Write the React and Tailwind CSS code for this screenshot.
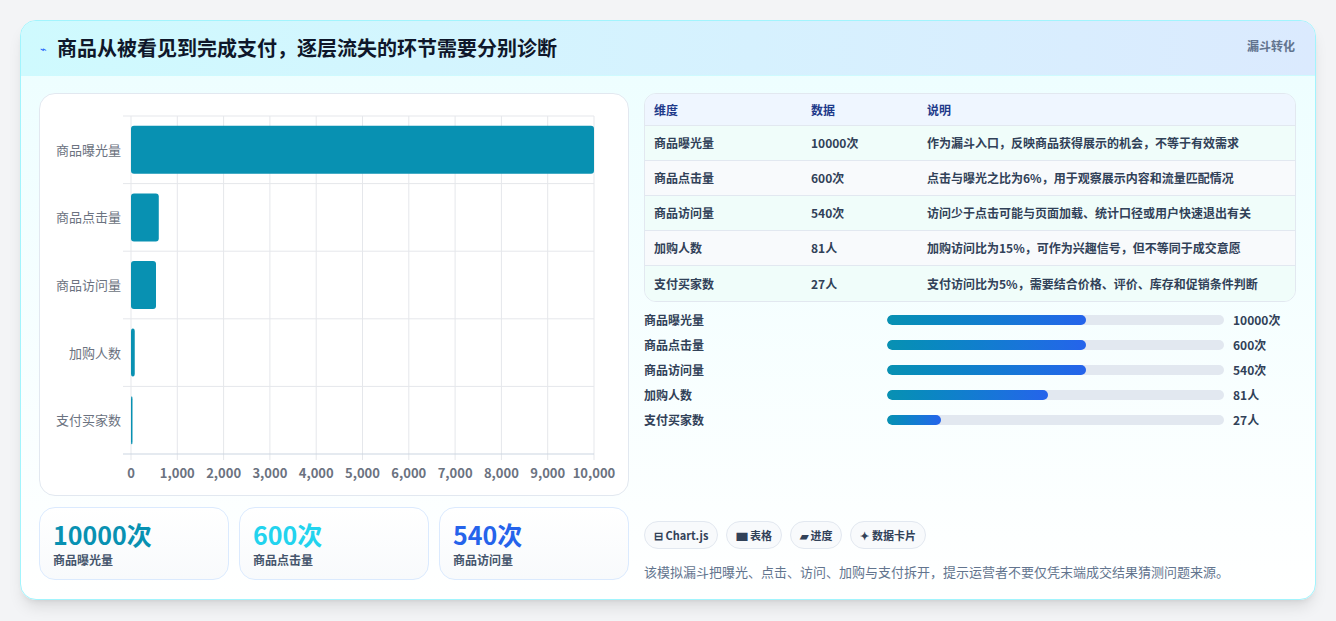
import React from "react";

const F = { fontFamily: '"Noto Sans CJK SC", "Noto Sans", sans-serif' };
const rows = [
  ["商品曝光量", "10000次", "作为漏斗入口，反映商品获得展示的机会，不等于有效需求", 10000, 199],
  ["商品点击量", "600次", "点击与曝光之比为6%，用于观察展示内容和流量匹配情况", 600, 199],
  ["商品访问量", "540次", "访问少于点击可能与页面加载、统计口径或用户快速退出有关", 540, 199],
  ["加购人数", "81人", "加购访问比为15%，可作为兴趣信号，但不等同于成交意愿", 81, 161],
  ["支付买家数", "27人", "支付访问比为5%，需要结合价格、评价、库存和促销条件判断", 27, 54],
];

function Chart() {
  const x0 = 91, x1 = 554, top = 22, rowH = 67.6;
  const sx = (v) => x0 + (v / 10000) * (x1 - x0);
  return (
    <svg width="590" height="403" style={F}>
      {Array.from({ length: 11 }).map((_, i) => (
        <g key={i}>
          <line x1={sx(i * 1000)} x2={sx(i * 1000)} y1={top} y2={top + rowH * 5 + 6} stroke="#e5e7eb" />
          <text x={sx(i * 1000)} y={384} textAnchor="middle" fontSize="13" fontWeight="600" fill="#6b7280">
            {i === 0 ? "0" : (i * 1000).toLocaleString("en-US")}
          </text>
        </g>
      ))}
      {Array.from({ length: 6 }).map((_, i) => (
        <line key={i} x1={x0 - 8} x2={x1} y1={top + rowH * i} y2={top + rowH * i} stroke={i === 5 ? "#cbd5e1" : "#e5e7eb"} />
      ))}
      {rows.map((r, i) => {
        const yc = top + rowH * i + rowH / 2;
        return (
          <g key={i}>
            <text x={81} y={yc + 5} textAnchor="end" fontSize="13" fill="#6b7280">{r[0]}</text>
            <rect x={x0} y={yc - 24} width={Math.max(sx(r[3]) - x0, 1.5)} height={48} rx="3" fill="#0891b2" />
          </g>
        );
      })}
    </svg>
  );
}

export default function App() {
  return (
    <div className="w-[1336px] h-[621px] bg-[#f3f4f6] pt-[20px] px-[20px]" style={F}>
      <div className="w-[1296px] h-[580px] rounded-2xl border border-cyan-200 overflow-hidden shadow-lg bg-gradient-to-b from-[#ecfeff] to-white">
        <div className="h-[55px] flex items-center justify-between pl-[19px] pr-5 bg-gradient-to-r from-[#cffafe] to-[#dbeafe] border-b border-cyan-100">
          <div className="flex items-center gap-[10px]">
            <span className="text-[11px] text-blue-600">⌁</span>
            <span className="text-[20px] font-bold text-[#0f172a]">商品从被看见到完成支付，逐层流失的环节需要分别诊断</span>
          </div>
          <span className="text-[12px] font-bold text-slate-500 self-start mt-[16px]">漏斗转化</span>
        </div>
        <div className="flex gap-[15px] px-[18px] pt-[17px]">
          <div className="w-[590px] flex flex-col gap-[11px]">
            <div className="h-[403px] rounded-2xl border border-slate-200 bg-white">
              <Chart />
            </div>
            <div className="flex gap-[10px]">
              {[["10000次", "text-[#0891b2]", "商品曝光量"], ["600次", "text-[#22d3ee]", "商品点击量"], ["540次", "text-[#2563eb]", "商品访问量"]].map((s, i) => (
                <div key={i} className="flex-1 h-[73px] rounded-2xl border border-blue-100 bg-gradient-to-b from-white to-[#f8fafc] px-[13px] pt-[10px]">
                  <div className={`text-[25px] font-bold leading-[32px] ${s[1]}`}>{s[0]}</div>
                  <div className="text-[12px] font-semibold text-slate-600 mt-[1px]">{s[2]}</div>
                </div>
              ))}
            </div>
          </div>
          <div className="w-[652px] flex flex-col">
            <div className="rounded-xl border border-slate-200 overflow-hidden text-[12px] font-semibold">
              <div className="flex h-[32px] items-center bg-[#eff6ff] text-[#1e3a8a] border-b border-slate-200">
                <div className="w-[166px] pl-[9px]">维度</div>
                <div className="w-[116px]">数据</div>
                <div>说明</div>
              </div>
              {rows.map((r, i) => (
                <div key={i} className={`flex h-[35px] items-center text-slate-700 ${i % 2 ? "bg-[#f8fafc]" : "bg-[#f0fdfa]"} ${i < 4 ? "border-b border-slate-200" : ""}`}>
                  <div className="w-[166px] pl-[9px]">{r[0]}</div>
                  <div className="w-[116px]">{r[1]}</div>
                  <div>{r[2]}</div>
                </div>
              ))}
            </div>
            <div className="flex flex-col gap-[7px] mt-[9px]">
              {rows.map((r, i) => (
                <div key={i} className="flex items-center h-[18px] text-[12px] font-semibold text-slate-700">
                  <div className="w-[243px]">{r[0]}</div>
                  <div className="w-[337px] h-[10px] rounded-full bg-slate-200 overflow-hidden">
                    <div className="h-full rounded-full bg-gradient-to-r from-[#0891b2] to-[#2563eb]" style={{ width: r[4] }} />
                  </div>
                  <div className="ml-[9px]">{r[1]}</div>
                </div>
              ))}
            </div>
            <div className="flex gap-[8px] mt-[92px] text-[11px] font-semibold text-slate-700">
              {["⊟ Chart.js", "▆ 表格", "▰ 进度", "✦ 数据卡片"].map((c) => (
                <span key={c} className="h-[28px] px-[9px] flex items-center rounded-full border border-slate-200 bg-[#f8fafc]">{c}</span>
              ))}
            </div>
            <div className="mt-[13px] text-[13px] text-slate-500">该模拟漏斗把曝光、点击、访问、加购与支付拆开，提示运营者不要仅凭末端成交结果猜测问题来源。</div>
          </div>
        </div>
      </div>
    </div>
  );
}
